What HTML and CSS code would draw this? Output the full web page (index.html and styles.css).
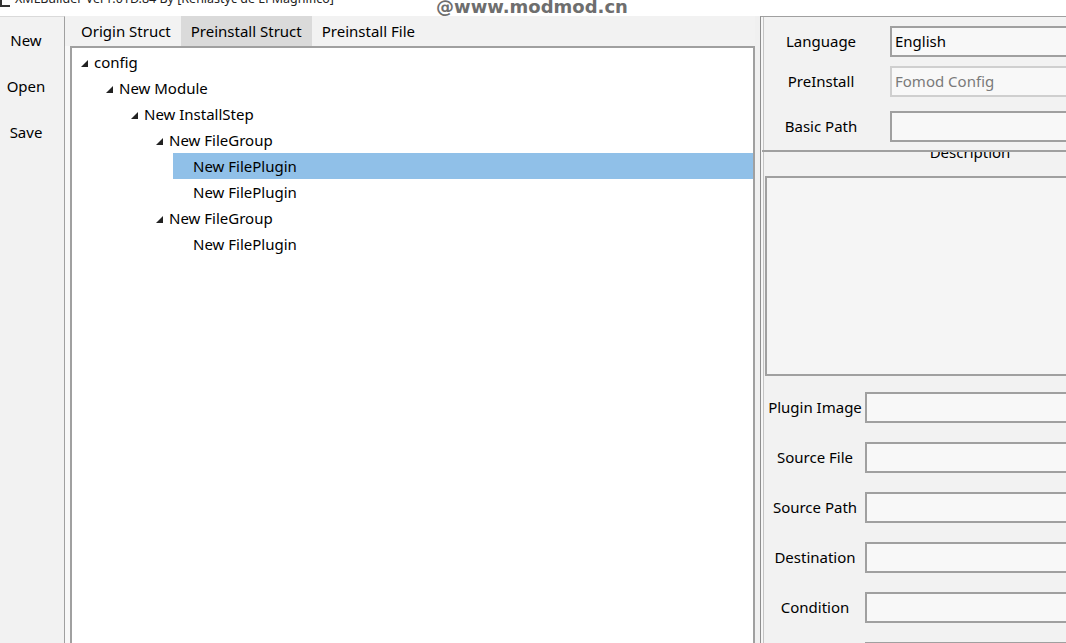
FILE: index.html
```html
<!DOCTYPE html>
<html>
<head>
    <meta charset="utf-8">
    <title>XMLBuilder</title>
    <link rel="stylesheet" href="styles.css">
</head>
<body>
    <div class="titlebar">
        <span class="app-icon"></span>
        <span class="title-text">XMLBuilder Ver1.01D.84 By [Renlastyc de El Magnifico]</span>
        <span class="watermark">@www.modmod.cn</span>
    </div>

    <div class="window">
        <div class="sidebar">
            <button class="side-btn">New</button>
            <button class="side-btn">Open</button>
            <button class="side-btn">Save</button>
        </div>

        <div class="center">
            <div class="tabs">
                <div class="tab">Origin Struct</div>
                <div class="tab active">Preinstall Struct</div>
                <div class="tab">Preinstall File</div>
            </div>
            <div class="tree">
                <div class="node lvl0"><span class="arrow"></span>config</div>
                <div class="node lvl1"><span class="arrow"></span>New Module</div>
                <div class="node lvl2"><span class="arrow"></span>New InstallStep</div>
                <div class="node lvl3"><span class="arrow"></span>New FileGroup</div>
                <div class="node lvl4 selected"><span class="label">New FilePlugin</span></div>
                <div class="node lvl4"><span class="label">New FilePlugin</span></div>
                <div class="node lvl3"><span class="arrow"></span>New FileGroup</div>
                <div class="node lvl4"><span class="label">New FilePlugin</span></div>
            </div>
        </div>

        <div class="props">
            <div class="props-top">
                <div class="row">
                    <label class="lbl">Language</label>
                    <div class="field">English</div>
                </div>
                <div class="row">
                    <label class="lbl">PreInstall</label>
                    <div class="field disabled">Fomod Config</div>
                </div>
                <div class="row row-path">
                    <label class="lbl">Basic Path</label>
                    <div class="field"></div>
                </div>
            </div>

            <div class="desc-group">
                <div class="desc-title">Description</div>
                <div class="desc-box"></div>
            </div>

            <div class="plugin-fields">
                <div class="prow"><label class="plbl">Plugin Image</label><div class="field"></div></div>
                <div class="prow"><label class="plbl">Source File</label><div class="field"></div></div>
                <div class="prow"><label class="plbl">Source Path</label><div class="field"></div></div>
                <div class="prow"><label class="plbl">Destination</label><div class="field"></div></div>
                <div class="prow"><label class="plbl">Condition</label><div class="field"></div></div>
                <div class="prow"><label class="plbl"></label><div class="field"></div></div>
            </div>
        </div>
    </div>
</body>
</html>
```

FILE: styles.css
```css
body {
    font-family: "Noto Sans", "Open Sans", sans-serif;
    font-size: 15px;
    color: #000;
    background: #fff;
    margin: 0;
    width: 1066px;
    height: 643px;
    overflow: hidden;
}
.titlebar {
    position: relative;
    height: 16px;
    overflow: hidden;
    background: #fff;
}
.app-icon {
    position: absolute;
    left: 0;
    top: -4px;
    width: 8px;
    height: 9px;
    border-left: 2px solid #333;
    border-bottom: 2px solid #333;
}
.title-text {
    position: absolute;
    left: 15px;
    top: -10px;
    font-size: 12.5px;
    color: #222;
    white-space: nowrap;
}
.watermark {
    position: absolute;
    left: 436px;
    top: -4px;
    font-family: "DejaVu Sans", sans-serif;
    font-size: 18px;
    font-weight: bold;
    color: #6e6e6e;
}
.window {
    display: flex;
    height: 627px;
    background: #f0f0f0;
}
.sidebar {
    width: 65px;
    flex-shrink: 0;
    background: #f2f2f2;
    border-top: 1px solid #dadada;
    border-right: 1px solid #a0a0a0;
    display: flex;
    flex-direction: column;
    box-sizing: border-box;
}
.side-btn {
    width: 52px;
    height: 46px;
    border: none;
    background: transparent;
    font-family: inherit;
    font-size: 15px;
    padding: 0;
    text-align: center;
}
.center {
    width: 685px;
    flex-shrink: 0;
    padding-left: 5px;
    background: #f8f8f8;
    display: flex;
    flex-direction: column;
}
.tabs {
    height: 30px;
    display: flex;
    background: #f2f2f2;
    margin-left: -5px;
    padding-left: 6px;
    white-space: nowrap;
}
.tab {
    padding: 0 10px;
    line-height: 30px;
}
.tab.active {
    background: #dadada;
}
.tree {
    flex: 1;
    background: #fff;
    border: 2px solid #a0a0a0;
    border-bottom: none;
    padding-top: 1px;
}
.node {
    height: 26px;
    line-height: 26px;
    white-space: nowrap;
}
.arrow {
    display: inline-block;
    width: 0;
    height: 0;
    border-left: 7px solid transparent;
    border-bottom: 7px solid #222;
    margin-right: 6px;
    vertical-align: 1px;
}
.lvl0 { padding-left: 9px; }
.lvl1 { padding-left: 34px; }
.lvl2 { padding-left: 59px; }
.lvl3 { padding-left: 84px; }
.lvl4 { padding-left: 101px; }
.label {
    display: block;
    padding-left: 20px;
}
.node.selected .label {
    background: #90c0e8;
}
.props {
    flex: 1;
    margin-left: 5px;
    background: #f2f2f2;
    border-left: 1px solid #8e8e8e;
    border-top: 1px solid #a0a0a0;
    box-shadow: inset 2px 0 0 #f6f6f6, inset 3px 0 0 #c4c4c4;
    overflow: hidden;
    display: flex;
    flex-direction: column;
}
.props-top {
    flex-shrink: 0;
    padding-top: 4px;
    height: 129px;
    border-bottom: 2px solid #a0a0a0;
    margin-left: 1px;
    width: 400px;
}
.row {
    display: flex;
    align-items: center;
    height: 40px;
}
.row-path {
    margin-top: 5px;
}
.lbl {
    width: 118px;
    text-align: center;
    flex-shrink: 0;
    margin-right: 10px;
}
.field {
    height: 27px;
    line-height: 27px;
    border: 2px solid #a0a0a0;
    background: #f8f8f8;
    padding-left: 3px;
    flex: 1;
}
.field.disabled {
    border-color: #cfcfcf;
    color: #7a7a7a;
}
.desc-group {
    flex-shrink: 0;
    height: 230px;
    overflow: hidden;
    padding-left: 4px;
    width: 400px;
}
.desc-title {
    text-align: center;
    width: 410px;
    margin-top: -12px;
    height: 36px;
    line-height: 24px;
}
.desc-box {
    height: 196px;
    border: 2px solid #a0a0a0;
    background: #f5f5f5;
}
.plugin-fields {
    flex-shrink: 0;
    width: 400px;
    padding-left: 4px;
}
.prow {
    display: flex;
    align-items: center;
    height: 50px;
}
.plbl {
    width: 100px;
    text-align: center;
    flex-shrink: 0;
    white-space: nowrap;
}
```
